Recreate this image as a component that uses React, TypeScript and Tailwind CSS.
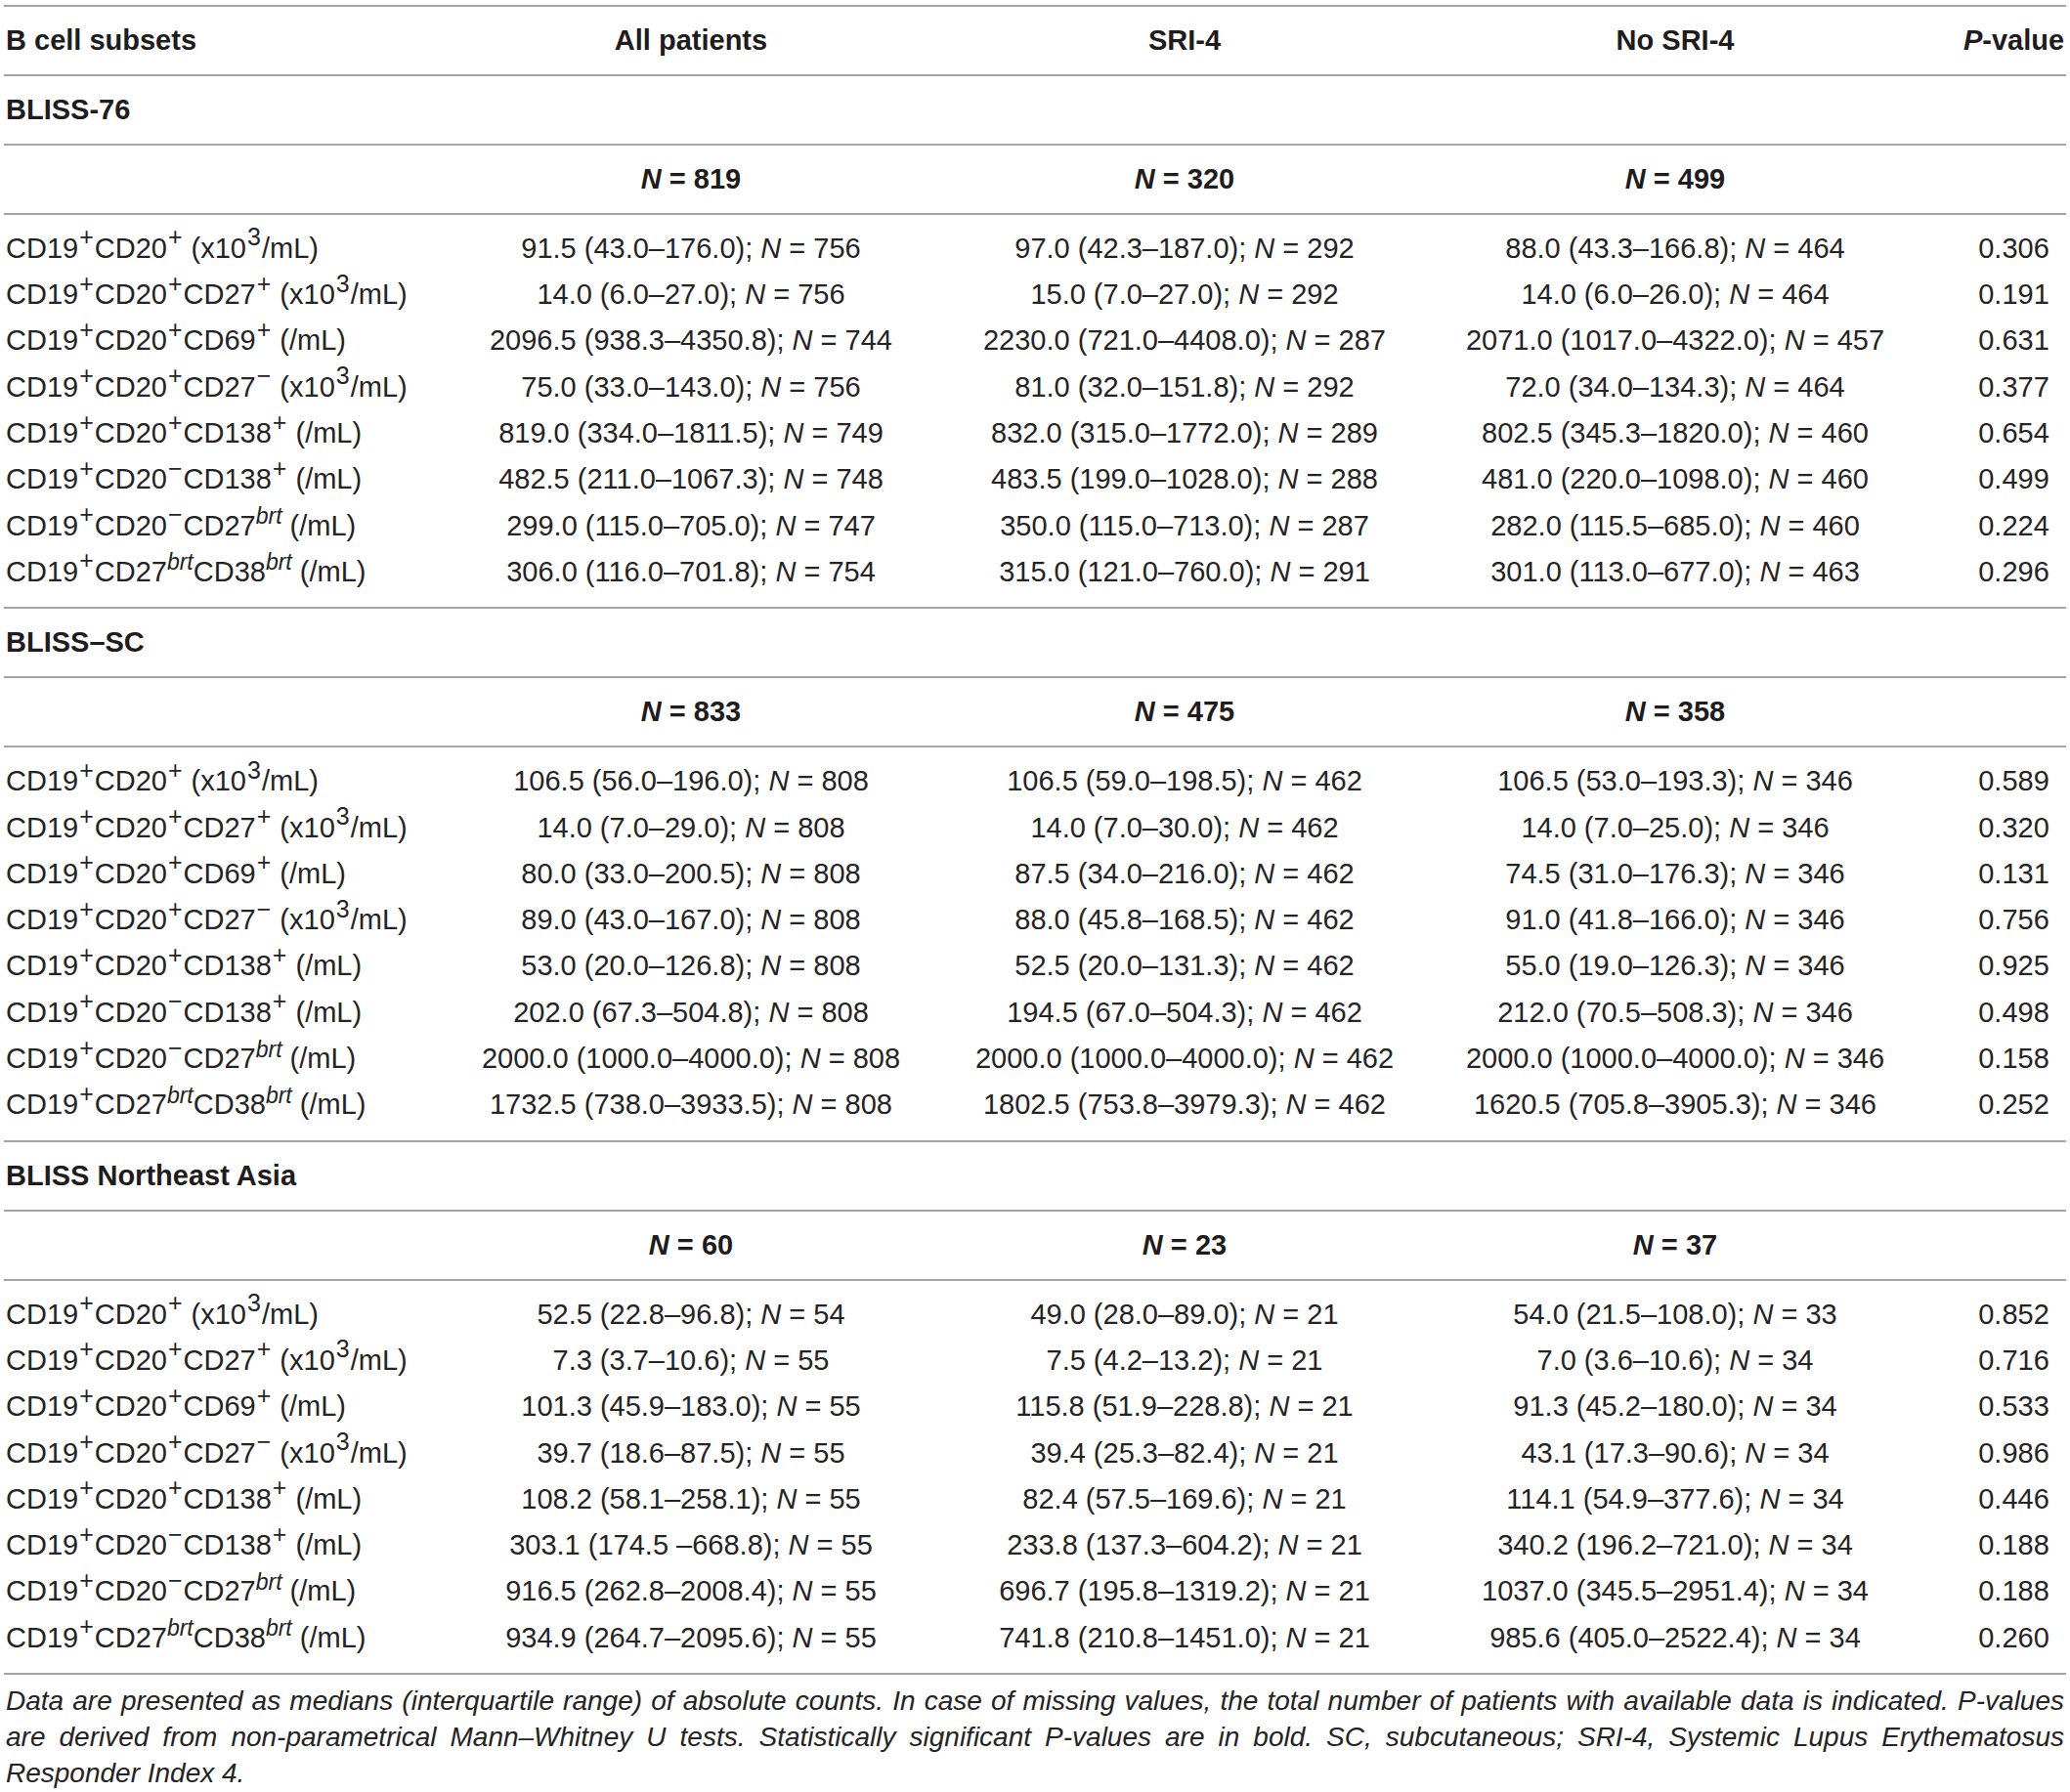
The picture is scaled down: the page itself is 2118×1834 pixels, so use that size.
import React from "react";

type Row = [string, string, string, string, string, string, string];

function S({ children }: { children: React.ReactNode }) {
  return <sup className="text-[25px] px-[1px]">{children}</sup>;
}

function B() {
  return <sup className="text-[23px] italic">brt</sup>;
}

const labels: React.ReactNode[] = [
  <>CD19<S>+</S>CD20<S>+</S> (x10<S>3</S>/mL)</>,
  <>CD19<S>+</S>CD20<S>+</S>CD27<S>+</S> (x10<S>3</S>/mL)</>,
  <>CD19<S>+</S>CD20<S>+</S>CD69<S>+</S> (/mL)</>,
  <>CD19<S>+</S>CD20<S>+</S>CD27<S>−</S> (x10<S>3</S>/mL)</>,
  <>CD19<S>+</S>CD20<S>+</S>CD138<S>+</S> (/mL)</>,
  <>CD19<S>+</S>CD20<S>−</S>CD138<S>+</S> (/mL)</>,
  <>CD19<S>+</S>CD20<S>−</S>CD27<B /> (/mL)</>,
  <>CD19<S>+</S>CD27<B />CD38<B /> (/mL)</>,
];

type Section = { title: string; ns: [string, string, string]; rows: Row[] };

const sections: Section[] = [
  {
    title: "BLISS-76",
    ns: ["819", "320", "499"],
    rows: [
      ["91.5 (43.0–176.0)", "756", "97.0 (42.3–187.0)", "292", "88.0 (43.3–166.8)", "464", "0.306"],
      ["14.0 (6.0–27.0)", "756", "15.0 (7.0–27.0)", "292", "14.0 (6.0–26.0)", "464", "0.191"],
      ["2096.5 (938.3–4350.8)", "744", "2230.0 (721.0–4408.0)", "287", "2071.0 (1017.0–4322.0)", "457", "0.631"],
      ["75.0 (33.0–143.0)", "756", "81.0 (32.0–151.8)", "292", "72.0 (34.0–134.3)", "464", "0.377"],
      ["819.0 (334.0–1811.5)", "749", "832.0 (315.0–1772.0)", "289", "802.5 (345.3–1820.0)", "460", "0.654"],
      ["482.5 (211.0–1067.3)", "748", "483.5 (199.0–1028.0)", "288", "481.0 (220.0–1098.0)", "460", "0.499"],
      ["299.0 (115.0–705.0)", "747", "350.0 (115.0–713.0)", "287", "282.0 (115.5–685.0)", "460", "0.224"],
      ["306.0 (116.0–701.8)", "754", "315.0 (121.0–760.0)", "291", "301.0 (113.0–677.0)", "463", "0.296"],
    ],
  },
  {
    title: "BLISS–SC",
    ns: ["833", "475", "358"],
    rows: [
      ["106.5 (56.0–196.0)", "808", "106.5 (59.0–198.5)", "462", "106.5 (53.0–193.3)", "346", "0.589"],
      ["14.0 (7.0–29.0)", "808", "14.0 (7.0–30.0)", "462", "14.0 (7.0–25.0)", "346", "0.320"],
      ["80.0 (33.0–200.5)", "808", "87.5 (34.0–216.0)", "462", "74.5 (31.0–176.3)", "346", "0.131"],
      ["89.0 (43.0–167.0)", "808", "88.0 (45.8–168.5)", "462", "91.0 (41.8–166.0)", "346", "0.756"],
      ["53.0 (20.0–126.8)", "808", "52.5 (20.0–131.3)", "462", "55.0 (19.0–126.3)", "346", "0.925"],
      ["202.0 (67.3–504.8)", "808", "194.5 (67.0–504.3)", "462", "212.0 (70.5–508.3)", "346", "0.498"],
      ["2000.0 (1000.0–4000.0)", "808", "2000.0 (1000.0–4000.0)", "462", "2000.0 (1000.0–4000.0)", "346", "0.158"],
      ["1732.5 (738.0–3933.5)", "808", "1802.5 (753.8–3979.3)", "462", "1620.5 (705.8–3905.3)", "346", "0.252"],
    ],
  },
  {
    title: "BLISS Northeast Asia",
    ns: ["60", "23", "37"],
    rows: [
      ["52.5 (22.8–96.8)", "54", "49.0 (28.0–89.0)", "21", "54.0 (21.5–108.0)", "33", "0.852"],
      ["7.3 (3.7–10.6)", "55", "7.5 (4.2–13.2)", "21", "7.0 (3.6–10.6)", "34", "0.716"],
      ["101.3 (45.9–183.0)", "55", "115.8 (51.9–228.8)", "21", "91.3 (45.2–180.0)", "34", "0.533"],
      ["39.7 (18.6–87.5)", "55", "39.4 (25.3–82.4)", "21", "43.1 (17.3–90.6)", "34", "0.986"],
      ["108.2 (58.1–258.1)", "55", "82.4 (57.5–169.6)", "21", "114.1 (54.9–377.6)", "34", "0.446"],
      ["303.1 (174.5 –668.8)", "55", "233.8 (137.3–604.2)", "21", "340.2 (196.2–721.0)", "34", "0.188"],
      ["916.5 (262.8–2008.4)", "55", "696.7 (195.8–1319.2)", "21", "1037.0 (345.5–2951.4)", "34", "0.188"],
      ["934.9 (264.7–2095.6)", "55", "741.8 (210.8–1451.0)", "21", "985.6 (405.0–2522.4)", "34", "0.260"],
    ],
  },
];

const grid = "grid grid-cols-[451px_504px_506px_498px_151px]";
const line = "border-b-2 border-[#a4a4a4]";

function Val({ v, n }: { v: string; n: string }) {
  return (
    <div className="text-center whitespace-nowrap">
      {v}; <i>N</i> = {n}
    </div>
  );
}

export default function App() {
  return (
    <div
      className="w-[2118px] bg-white text-[#262324] pt-[5px]"
      style={{ fontFamily: '"Liberation Sans", Arial, sans-serif' }}
    >
      <div className="mx-[4px] w-[2110px] border-t-2 border-[#a4a4a4]">
        {/* header */}
        <div className={`${grid} ${line} h-[71px] items-center text-[29px] font-bold text-[#1f1c1d]`}>
          <div className="pl-[2px]">B cell subsets</div>
          <div className="text-center">All patients</div>
          <div className="text-center">SRI-4</div>
          <div className="text-center">No SRI-4</div>
          <div className="pl-[44px] text-center whitespace-nowrap">
            <i>P</i>-value
          </div>
        </div>

        {sections.map((s) => (
          <div key={s.title}>
            <div className={`${line} h-[71px] flex items-center text-[29px] font-bold pl-[2px] text-[#1f1c1d]`}>
              {s.title}
            </div>
            <div className={`${grid} ${line} h-[71px] items-center text-[29px] font-bold text-[#1f1c1d]`}>
              <div />
              {s.ns.map((n, i) => (
                <div key={i} className="text-center">
                  <i>N</i> = {n}
                </div>
              ))}
              <div />
            </div>
            <div className={`${line} pt-[11px] pb-[12px] text-[29px]`}>
              {s.rows.map((r, i) => (
                <div key={i} className={`${grid} h-[47.3px] items-center`}>
                  <div className="pl-[2px] whitespace-nowrap">{labels[i]}</div>
                  <Val v={r[0]} n={r[1]} />
                  <Val v={r[2]} n={r[3]} />
                  <Val v={r[4]} n={r[5]} />
                  <div className="pl-[44px] text-center">{r[6]}</div>
                </div>
              ))}
            </div>
          </div>
        ))}

        {/* footnote */}
        <div className="pt-[9px] text-[28px] italic leading-[36.7px] pl-[2px] pr-[2px]">
          <div className="whitespace-nowrap text-justify [text-align-last:justify]">
            Data are presented as medians (interquartile range) of absolute counts. In case of missing values, the total number of patients with available data is indicated. P-values
          </div>
          <div className="whitespace-nowrap text-justify [text-align-last:justify]">
            are derived from non-parametrical Mann–Whitney U tests. Statistically significant P-values are in bold. SC, subcutaneous; SRI-4, Systemic Lupus Erythematosus
          </div>
          <div>Responder Index 4.</div>
        </div>
      </div>
    </div>
  );
}
